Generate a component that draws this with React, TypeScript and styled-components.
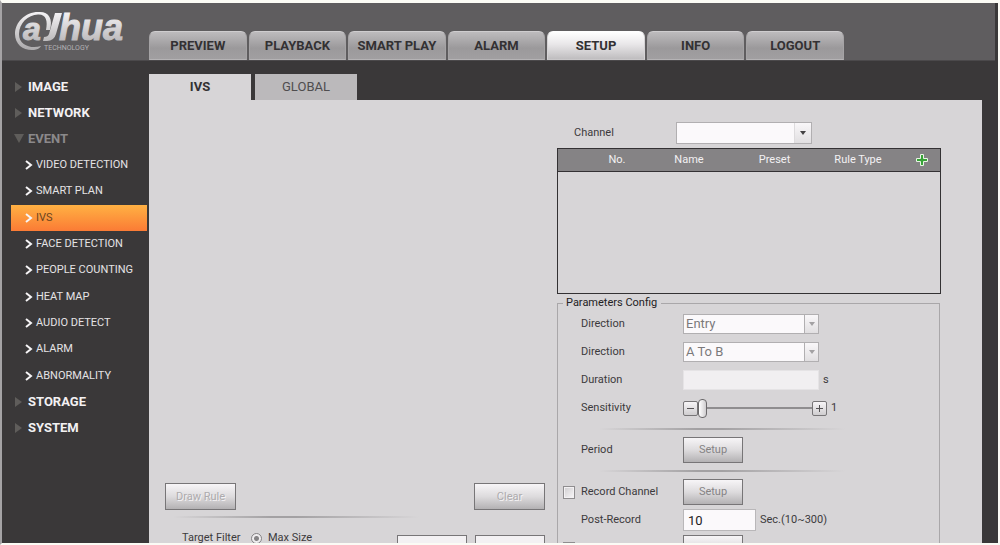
import React from "react";
import styled, { createGlobalStyle, css } from "styled-components";

const GlobalStyle = createGlobalStyle`
  *, *::before, *::after { box-sizing: border-box; }
  body {
    margin: 0;
    background: #fbfbf5;
    font-family: Roboto, "Liberation Sans", Arial, sans-serif;
    font-size: 11px;
    line-height: 16px;
    color: #3c3a3c;
  }
  button, input, select { font: inherit; color: inherit; margin: 0; }
  ul { list-style: none; margin: 0; padding: 0; }
  a { color: inherit; text-decoration: none; }
`;

const Frame = styled.div`
  height: 100vh;
  overflow: hidden;
  display: flex;
  flex-direction: column;
  background: #3a3839;
  border: solid #fbfbf5;
  border-width: 3px 2px 2px 0;
  border-left: 2px solid #a5a3a5;
`;

const Header = styled.header`
  flex: none;
  display: flex;
  align-items: flex-end;
  height: 58px;
  margin-right: 3px;
  background: #5f5d5f;
  border-bottom: 1px solid #4b494b;
`;

const Brand = styled.a`
  width: 147px;
  height: 57px;
  padding: 4px 0 0 8px;
`;

const MainNav = styled.nav`
  display: grid;
  grid-template-columns: repeat(7, 1fr);
  gap: 2px;
  width: 695px;
`;

const MainTab = styled.a<{ $active?: boolean }>`
  height: 29px;
  border-radius: 6px 6px 0 0;
  border: 1px solid #cfcdcf;
  border-color: #cfcdcf #a5a3a5 #b5b3b5;
  background: linear-gradient(#bdbbbd, #9b999b 60%, #a19fa1);
  color: #333133;
  font-size: 13px;
  font-weight: bold;
  line-height: 27px;
  text-align: center;
  white-space: nowrap;
  ${(p) =>
    p.$active &&
    css`
      background: linear-gradient(#ffffff, #e9e7e9 45%, #bfbdbf);
      border-color: #ffffff #d5d3d5 #c9c7c9;
    `}
`;

const Body = styled.div`
  flex: 1;
  min-height: 0;
  display: flex;
`;

const Sidebar = styled.nav`
  flex: none;
  width: 147px;
  padding: 13px 2px 0 9px;
`;

const Group = styled.a<{ $open?: boolean }>`
  display: flex;
  align-items: center;
  gap: 4px;
  height: 26px;
  padding-left: 3px;
  color: ${(p) => (p.$open ? "#8b898b" : "#f3f1f3")};
  font-size: 13px;
  font-weight: bold;
`;

const SubMenu = styled.ul`
  display: grid;
  grid-auto-rows: 1fr;
  height: 237px;
`;

const SubItem = styled.a<{ $active?: boolean }>`
  display: flex;
  align-items: center;
  gap: 3px;
  height: 100%;
  padding-left: 14px;
  white-space: nowrap;
  color: ${(p) => (p.$active ? "#6b4520" : "#e5e3e5")};
  background: ${(p) => (p.$active ? "linear-gradient(#ffb143, #fb7b35)" : "none")};
`;

const Content = styled.main`
  flex: 1;
  min-width: 0;
  display: flex;
  flex-direction: column;
  padding: 13px 16px 0 0;
`;

const PageTabs = styled.div`
  flex: none;
  display: flex;
  gap: 4px;
`;

const PageTab = styled.button<{ $active?: boolean }>`
  width: 102px;
  height: 26px;
  padding: 0;
  border: 0;
  font-size: 13px;
  font-weight: ${(p) => (p.$active ? "bold" : "normal")};
  background: ${(p) => (p.$active ? "#d7d5d7" : "#bbb9bb")};
  color: ${(p) => (p.$active ? "#333133" : "#4f4d4f")};
`;

const Panel = styled.div`
  flex: 1;
  min-height: 0;
  display: grid;
  grid-template-columns: minmax(0, 1fr) 384px;
  padding-right: 41px;
  background: #d7d5d7;
`;

const VideoColumn = styled.section`
  padding: 0 12px 0 16px;
`;

const VideoArea = styled.div`
  height: 383px;
`;

const ButtonRow = styled.div`
  display: flex;
  justify-content: space-between;
`;

const PushButton = styled.button<{ $wide?: boolean }>`
  width: ${(p) => (p.$wide ? 71 : 60)}px;
  height: ${(p) => (p.$wide ? 27 : 26)}px;
  padding: 0;
  border: 1px solid #777577;
  background: linear-gradient(#f7f5f7, #dddbdd 50%, #b3b1b3);
  &:disabled { color: #858385; }
`;

const EmbossedButton = styled(PushButton)`
  &:disabled {
    color: #adabad;
    text-shadow: 1px 1px 0 #f5f3f5;
  }
`;

const Divider = styled.hr<{ $indent: number }>`
  width: 246px;
  height: 2px;
  margin: 6px 0 6px ${(p) => p.$indent}px;
  border: 0;
  background: linear-gradient(90deg, transparent, #a3a1a3 40%, #a3a1a3 50%, transparent);
`;

const FilterRow = styled.div`
  display: flex;
  align-items: center;
  height: 28px;
  padding-left: 17px;
  gap: 8px;
`;

const FilterLabel = styled.span`
  width: 61px;
  white-space: nowrap;
`;

const Radio = styled.input`
  appearance: none;
  width: 11px;
  height: 11px;
  margin-right: 6px;
  border: 1px solid #858385;
  border-radius: 50%;
  background: radial-gradient(#858385 0 2px, #efedef 3px);
`;

const RadioLabel = styled.label`
  display: flex;
  align-items: center;
  flex: 1;
`;

const SizeField = styled.input`
  align-self: flex-start;
  width: 70px;
  height: 26px;
  margin-top: 11px;
  border: 1px solid #777577;
  background: #f3f1f3;
`;

const ConfigColumn = styled.section`
  padding-top: 19px;
`;

const ChannelRow = styled.div`
  display: flex;
  align-items: center;
  height: 29px;
  padding: 0 0 1px 17px;
`;

const ChannelLabel = styled.label`
  width: 102px;
`;

const Picker = styled.span<{ $tall?: boolean }>`
  display: grid;
  width: 136px;
  height: ${(p) => (p.$tall ? 22 : 20)}px;
  background: #fbf9fb;
  border: 1px solid #b1afb1;
`;

const NativeSelect = styled.select`
  grid-area: 1 / 1;
  appearance: none;
  width: 100%;
  height: 100%;
  padding: 0 18px 0 2px;
  border: 0;
  background: transparent;
  font-size: 13px;
  &:disabled { color: #7b797b; opacity: 1; }
`;

const PickerArrow = styled.span<{ $muted?: boolean }>`
  grid-area: 1 / 1;
  justify-self: end;
  display: flex;
  align-items: center;
  justify-content: center;
  width: ${(p) => (p.$muted ? 14 : 17)}px;
  border-left: 1px solid ${(p) => (p.$muted ? "#b1afb1" : "#dddbdd")};
  background: linear-gradient(#f9f7f9, #e1dfe1);
  color: ${(p) => (p.$muted ? "#a3a1a3" : "#444244")};
  pointer-events: none;
`;

const RuleBox = styled.div`
  height: 146px;
  border: 1px solid #333133;
`;

const RuleTable = styled.table`
  width: 100%;
  border-collapse: collapse;
  table-layout: fixed;
  th {
    height: 22px;
    padding: 0;
    font-weight: normal;
    color: #f3f1f3;
    background: #858385;
    border-bottom: 1px solid #333133;
  }
  th:last-child {
    padding-left: 13px;
  }
`;

const AddButton = styled.button`
  display: block;
  width: 12px;
  height: 12px;
  margin: 0 auto;
  padding: 0;
  border: 0;
  background: none;
`;

const Fieldset = styled.fieldset`
  margin: 2px 1px 0 0;
  padding: 0 0 0 5px;
  border: 1px solid #a9a7a9;
  height: 300px;
  legend {
    padding: 0 4px 0 3px;
    line-height: 14px;
    color: #232123;
  }
`;

const Row = styled.div`
  display: flex;
  align-items: center;
  height: 28px;
`;

const Tick = styled.span`
  display: flex;
  width: 18px;
`;

const Caption = styled.span`
  width: 102px;
`;

const Checkbox = styled.input`
  appearance: none;
  width: 12px;
  height: 13px;
  border: 1px solid #8f8d8f;
  background: linear-gradient(135deg, #cfcdcf, #f9f7f9);
  box-shadow: inset 0 0 0 1px #f3f1f3;
`;

const TextField = styled.input<{ $wide?: boolean }>`
  width: ${(p) => (p.$wide ? 136 : 73)}px;
  height: ${(p) => (p.$wide ? 20 : 22)}px;
  padding: 0 4px;
  border: 1px solid #b9b7b9;
  background: #fbf9fb;
  color: #232123;
  font-size: 13px;
  &:disabled { background: #f1eff1; border-color: #e5e3e5; }
`;

const Unit = styled.span`
  padding-left: 4px;
`;

const StepButton = styled.button`
  display: flex;
  align-items: center;
  justify-content: center;
  width: 15px;
  height: 15px;
  padding: 0;
  border: 1px solid #777577;
  border-radius: 2px;
  background: linear-gradient(#f7f5f7, #cfcdcf);
`;

const Slider = styled.input`
  appearance: none;
  width: 114px;
  height: 20px;
  padding: 0;
  background: linear-gradient(#8f8d8f, #8f8d8f) center / 100% 2px no-repeat;
  &::-webkit-slider-thumb {
    appearance: none;
    width: 9px;
    height: 19px;
    border: 1px solid #6b696b;
    border-radius: 4px;
    background: linear-gradient(90deg, #ffffff, #cfcdcf);
  }
`;

const Logo = () => (
  <svg width="120" height="52" viewBox="0 0 120 52" role="img" aria-label="Dahua Technology">
    <defs>
      <linearGradient id="metal" gradientUnits="userSpaceOnUse" x1="0" y1="4" x2="0" y2="44">
        <stop offset="0" stopColor="#f7f5f7" />
        <stop offset="1" stopColor="#a9a7a9" />
      </linearGradient>
    </defs>
    <g fill="url(#metal)">
      <path d="M40 23C43 12 39 5 30 5C16 4 5 15 5 27C5 38 14 44 24 43C27 42.700 30 41 31 39C22 42 9 39 9 27C9 16 18 8 28 7.500C36 7 38 14 36 23Z" />
      <path d="M45 6H52L46 27Q44 34 37 34H33L34 30Q38 30 39 27Z" />
    </g>
    <g
      fill="url(#metal)"
      stroke="url(#metal)"
      strokeWidth="1"
      fontFamily="Liberation Sans"
      fontWeight="bold"
      fontStyle="italic"
    >
      <text x="13" y="33" fontSize="32">a</text>
      <text x="49" y="33" fontSize="36">hua</text>
    </g>
    <text x="34" y="43" fontSize="7" fontFamily="Roboto" fill="#b3b1b3">
      TECHNOLOGY
    </text>
  </svg>
);

const Triangle = ({ open }: { open?: boolean }) => (
  <svg width="10" height="12" viewBox="0 0 10 12" aria-hidden="true">
    <path d={open ? "M0 1H10L5 10Z" : "M1 1L8 6L1 11Z"} fill="#5f5d5b" />
  </svg>
);

const Chevron = () => (
  <svg width="8" height="10" viewBox="0 0 8 10" aria-hidden="true">
    <path d="M1 1L6 5L1 9" fill="none" stroke="#f7f5f7" strokeWidth="2" />
  </svg>
);

const DownArrow = () => (
  <svg width="6" height="4" viewBox="0 0 6 4" aria-hidden="true">
    <path d="M0 0H6L3 4Z" fill="currentColor" />
  </svg>
);

const Sign = ({ plus }: { plus?: boolean }) => (
  <svg width="7" height="7" viewBox="0 0 7 7" aria-hidden="true">
    <path d={plus ? "M0 3.500H7M3.500 0V7" : "M0 3.500H7"} stroke="#555355" />
  </svg>
);

const AddIcon = () => (
  <svg width="12" height="12" viewBox="0 0 12 12" aria-hidden="true">
    <path
      d="M4.500 0.500H7.500V4.500H11.500V7.500H7.500V11.500H4.500V7.500H0.500V4.500H4.500Z"
      fill="#37a337"
      stroke="#e9f5e5"
    />
  </svg>
);

const mainTabs = ["PREVIEW", "PLAYBACK", "SMART PLAY", "ALARM", "SETUP", "INFO", "LOGOUT"];
const eventItems = [
  "VIDEO DETECTION",
  "SMART PLAN",
  "IVS",
  "FACE DETECTION",
  "PEOPLE COUNTING",
  "HEAT MAP",
  "AUDIO DETECT",
  "ALARM",
  "ABNORMALITY",
];

const directions = [
  { id: "direction-mode", value: "Entry" },
  { id: "direction-line", value: "A To B" },
];

export default function App() {
  return (
    <>
      <GlobalStyle />
      <Frame>
        <Header>
          <Brand href="#">
            <Logo />
          </Brand>
          <MainNav>
            {mainTabs.map((t) => (
              <MainTab key={t} href="#" $active={t === "SETUP"}>
                {t}
              </MainTab>
            ))}
          </MainNav>
        </Header>
        <Body>
          <Sidebar>
            <Group href="#"><Triangle />IMAGE</Group>
            <Group href="#"><Triangle />NETWORK</Group>
            <Group href="#" $open><Triangle open />EVENT</Group>
            <SubMenu>
              {eventItems.map((t) => (
                <li key={t}>
                  <SubItem href="#" $active={t === "IVS"}>
                    <Chevron />
                    {t}
                  </SubItem>
                </li>
              ))}
            </SubMenu>
            <Group href="#"><Triangle />STORAGE</Group>
            <Group href="#"><Triangle />SYSTEM</Group>
          </Sidebar>
          <Content>
            <PageTabs>
              <PageTab $active>IVS</PageTab>
              <PageTab>GLOBAL</PageTab>
            </PageTabs>
            <Panel>
              <VideoColumn>
                <VideoArea />
                <ButtonRow>
                  <EmbossedButton $wide disabled>Draw Rule</EmbossedButton>
                  <EmbossedButton $wide disabled>Clear</EmbossedButton>
                </ButtonRow>
                <Divider $indent={8} />
                <FilterRow>
                  <FilterLabel>Target Filter</FilterLabel>
                  <RadioLabel>
                    <Radio type="radio" name="filter" defaultChecked />
                    Max Size
                  </RadioLabel>
                  <SizeField aria-label="Width" />
                  <SizeField aria-label="Height" />
                </FilterRow>
              </VideoColumn>
              <ConfigColumn>
                <ChannelRow>
                  <ChannelLabel htmlFor="channel">Channel</ChannelLabel>
                  <Picker $tall>
                    <NativeSelect id="channel">
                      <option></option>
                    </NativeSelect>
                    <PickerArrow><DownArrow /></PickerArrow>
                  </Picker>
                </ChannelRow>
                <RuleBox>
                  <RuleTable>
                    <colgroup>
                      <col width="22" />
                      <col width="74" />
                      <col width="70" />
                      <col width="101" />
                      <col width="66" />
                      <col />
                    </colgroup>
                    <thead>
                      <tr>
                        <th></th>
                        <th>No.</th>
                        <th>Name</th>
                        <th>Preset</th>
                        <th>Rule Type</th>
                        <th>
                          <AddButton aria-label="Add rule"><AddIcon /></AddButton>
                        </th>
                      </tr>
                    </thead>
                  </RuleTable>
                </RuleBox>
                <Fieldset>
                  <legend>Parameters Config</legend>
                  {directions.map((d) => (
                    <Row key={d.id}>
                      <Tick />
                      <Caption as="label" htmlFor={d.id}>Direction</Caption>
                      <Picker>
                        <NativeSelect id={d.id} disabled>
                          <option>{d.value}</option>
                        </NativeSelect>
                        <PickerArrow $muted><DownArrow /></PickerArrow>
                      </Picker>
                    </Row>
                  ))}
                  <Row>
                    <Tick />
                    <Caption as="label" htmlFor="duration">Duration</Caption>
                    <TextField id="duration" $wide disabled />
                    <Unit>s</Unit>
                  </Row>
                  <Row>
                    <Tick />
                    <Caption as="label" htmlFor="sensitivity">Sensitivity</Caption>
                    <StepButton aria-label="Decrease"><Sign /></StepButton>
                    <Slider id="sensitivity" type="range" min="1" max="10" defaultValue="1" />
                    <StepButton aria-label="Increase"><Sign plus /></StepButton>
                    <Unit>1</Unit>
                  </Row>
                  <Divider $indent={36} />
                  <Row>
                    <Tick />
                    <Caption>Period</Caption>
                    <PushButton disabled>Setup</PushButton>
                  </Row>
                  <Divider $indent={36} />
                  <Row>
                    <Tick><Checkbox type="checkbox" id="record" /></Tick>
                    <Caption as="label" htmlFor="record">Record Channel</Caption>
                    <PushButton disabled>Setup</PushButton>
                  </Row>
                  <Row>
                    <Tick />
                    <Caption as="label" htmlFor="post">Post-Record</Caption>
                    <TextField id="post" defaultValue="10" />
                    <Unit>Sec.(10~300)</Unit>
                  </Row>
                  <Row>
                    <Tick><Checkbox type="checkbox" aria-label="Relay-out" /></Tick>
                    <Caption />
                    <PushButton aria-label="Relay-out setup" disabled />
                  </Row>
                </Fieldset>
              </ConfigColumn>
            </Panel>
          </Content>
        </Body>
      </Frame>
    </>
  );
}
